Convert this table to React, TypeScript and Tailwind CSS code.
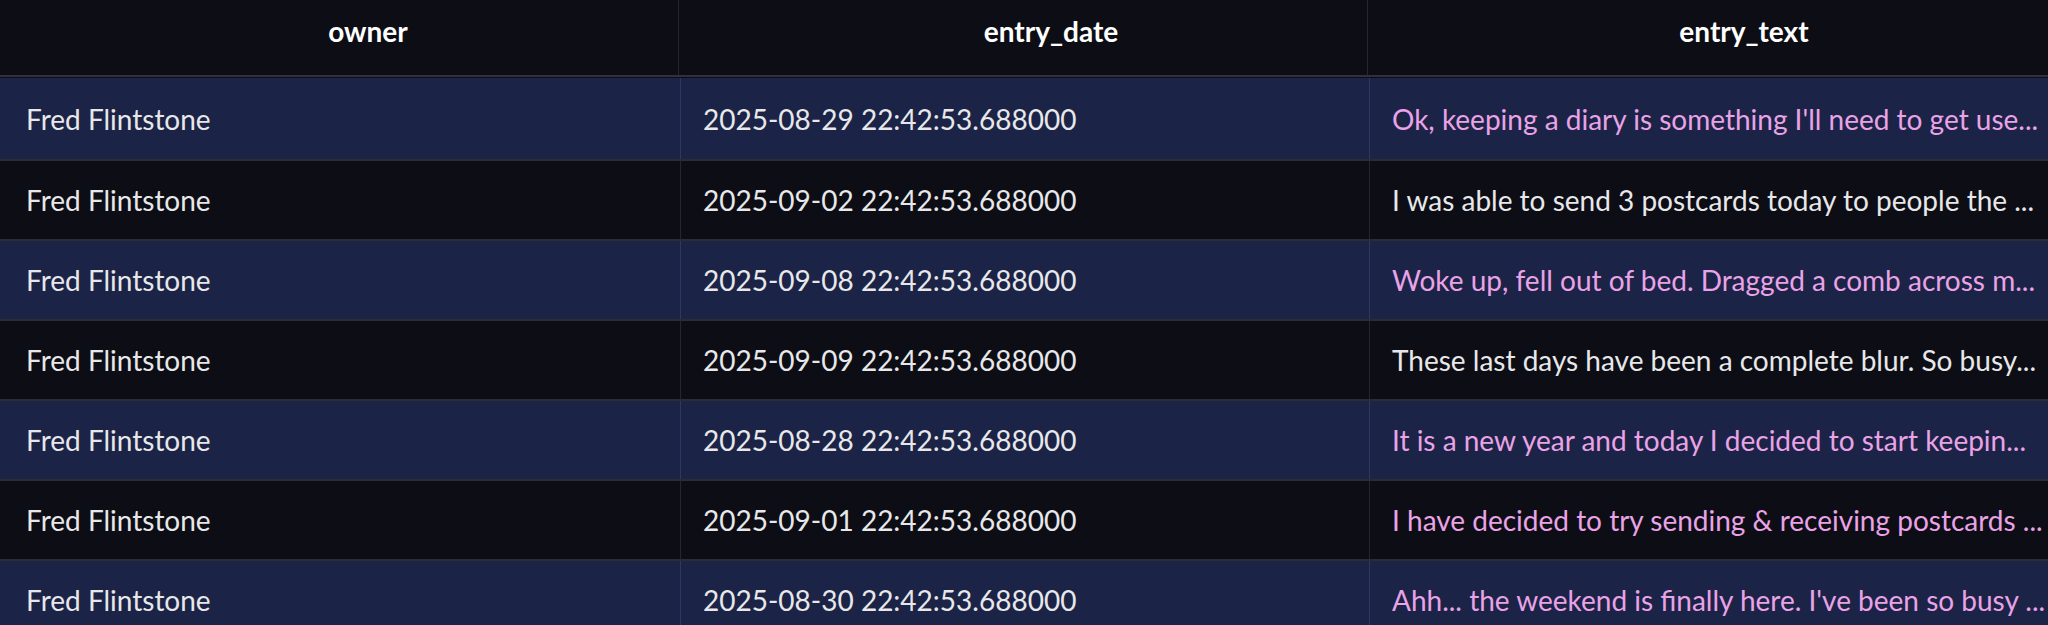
import React from "react";

const rows = [
  { date: "2025-08-29 22:42:53.688000", text: "Ok, keeping a diary is something I'll need to get use...", pink: true },
  { date: "2025-09-02 22:42:53.688000", text: "I was able to send 3 postcards today to people the ...", pink: false },
  { date: "2025-09-08 22:42:53.688000", text: "Woke up, fell out of bed. Dragged a comb across m...", pink: true },
  { date: "2025-09-09 22:42:53.688000", text: "These last days have been a complete blur. So busy...", pink: false },
  { date: "2025-08-28 22:42:53.688000", text: "It is a new year and today I decided to start keepin...", pink: true },
  { date: "2025-09-01 22:42:53.688000", text: "I have decided to try sending & receiving postcards ...", pink: true },
  { date: "2025-08-30 22:42:53.688000", text: "Ahh... the weekend is finally here. I've been so busy ...", pink: true },
];

export default function App() {
  return (
    <div
      className="w-[2048px] h-[625px] overflow-hidden bg-[#0d0e15] text-[#e8e8ea]"
      style={{ fontFamily: "Lato, 'Noto Sans', sans-serif" }}
    >
      <div className="grid grid-cols-[678px_689px_1fr] h-[77px] border-b-2 border-[#30313a] bg-[#0d0e15]">
        <div className="flex items-center justify-center pl-[58px] pb-[14px] text-[28px] font-bold text-white">owner</div>
        <div className="flex items-center justify-center pl-[56px] pb-[14px] text-[28px] font-bold text-white border-l border-[#25262e]">entry_date</div>
        <div className="flex items-center justify-center pl-[72px] pb-[14px] text-[28px] font-bold text-white border-l border-[#25262e]">entry_text</div>
      </div>
      <div className="h-px bg-[#0d0e15]" />
      {rows.map((r, i) => (
        <div
          key={i}
          className={`grid grid-cols-[680px_689px_1fr] border-b-2 border-[#2b2c35] ${i === 0 ? "h-[83px]" : "h-[80px]"} ${i % 2 === 0 ? "bg-[#1b2347]" : "bg-[#0d0e15]"}`}
        >
          <div className="flex items-center pl-[26px] text-[28px] whitespace-nowrap overflow-hidden">Fred Flintstone</div>
          <div className={`flex items-center pl-[22px] text-[28px] whitespace-nowrap overflow-hidden border-l ${i % 2 === 0 ? "border-[#2f3862]" : "border-[#25262e]"}`}>{r.date}</div>
          <div className={`flex items-center pl-[22px] text-[28px] whitespace-nowrap overflow-hidden border-l ${i % 2 === 0 ? "border-[#2f3862]" : "border-[#25262e]"} ${r.pink ? "text-[#e9a3e6]" : "text-[#e8e8ea]"}`}>{r.text}</div>
        </div>
      ))}
    </div>
  );
}
